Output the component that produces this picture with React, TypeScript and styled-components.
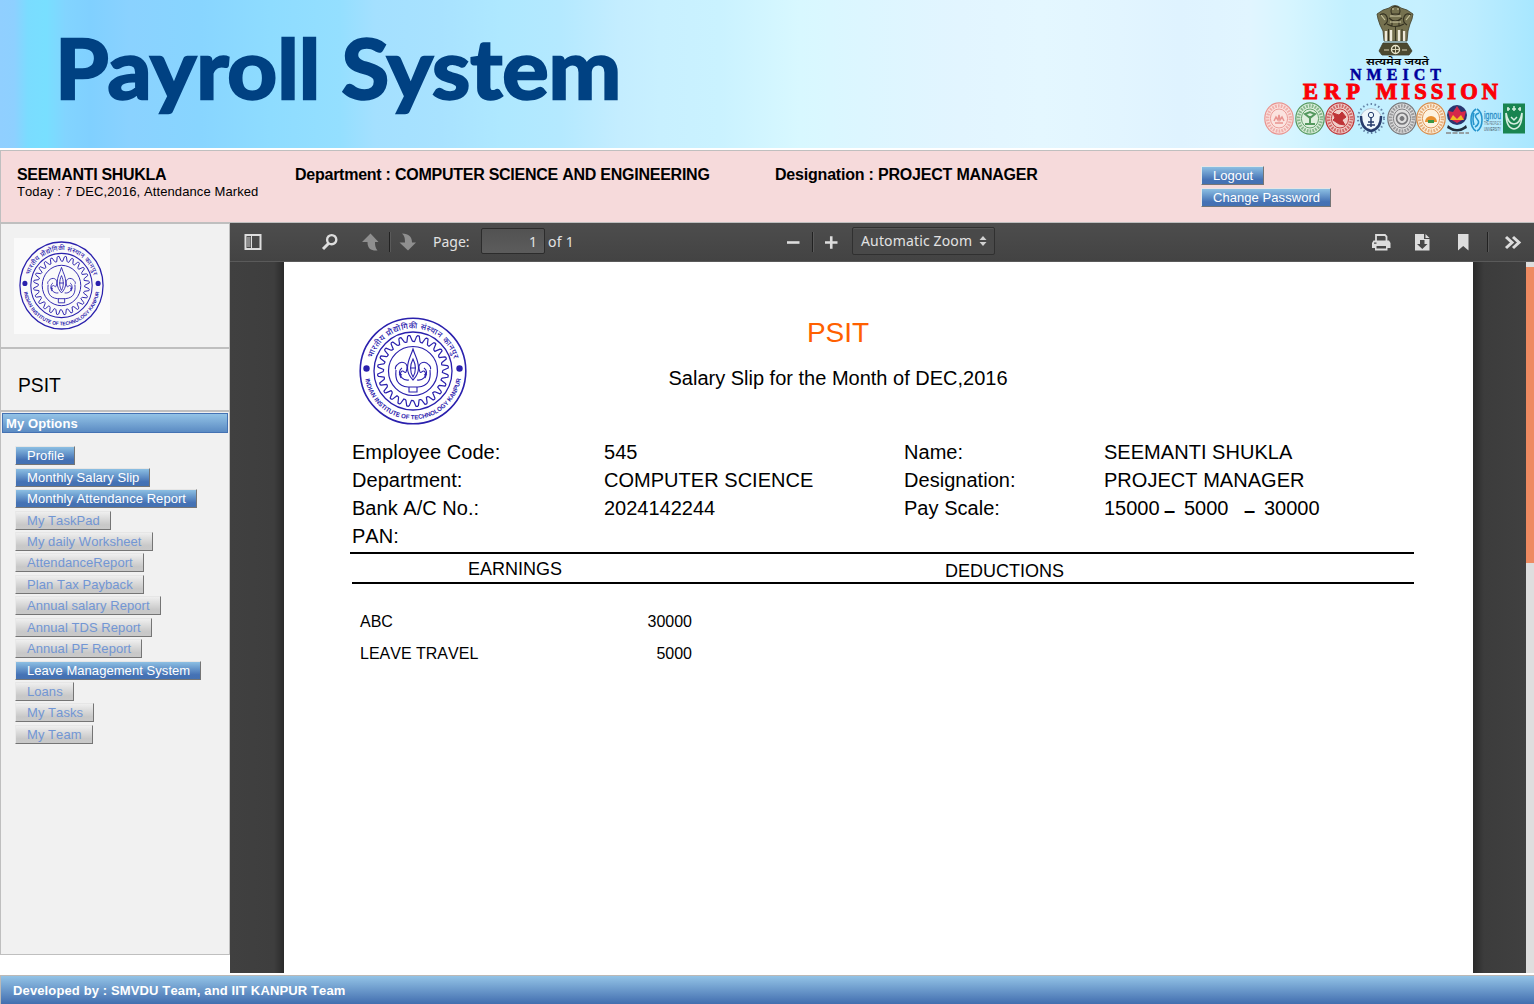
import React from "react";
import styled, { createGlobalStyle } from "styled-components";

const Global = createGlobalStyle`
  * { box-sizing: border-box; }
  html, body { margin: 0; padding: 0; background: #fff; }
  body { font-family: "Liberation Sans", Arial, sans-serif; font-kerning: none; color: #000; overflow: hidden; }
  h1, h2, p, ul { margin: 0; padding: 0; }
`;

const Screen = styled.div`
  width: 1534px;
  height: 1004px;
  display: flex;
  flex-direction: column;
  overflow: hidden;
`;

/* ---------- banner ---------- */

const Banner = styled.header`
  height: 148px;
  flex: none;
  display: flex;
  justify-content: space-between;
  background: linear-gradient(
    90deg,
    #90cfff 0, #8ed0ff 14px, #7adcff 28px, #78dfff 46px, #82d4ff 66px, #80d0ff 90px,
    #8ad2ff 130px, #88d5ff 200px, #8edcff 270px, #94dfff 340px, #a4e0ff 375px,
    #a8e2ff 440px, #aee8ff 500px, #b4e9ff 560px, #c4edff 620px, #c8f0ff 660px,
    #caf2ff 720px, #d8f8ff 800px, #dcf6ff 860px, #e2f5ff 960px, #e4f7ff 1040px,
    #e2f5ff 1120px, #dff3ff 1180px, #e1f5ff 1250px, #d6f5ff 1290px, #c2f0ff 1350px,
    #c6f0ff 1420px, #bdedff 1470px, #a8e7ff 1534px
  );
`;

const BannerTitle = styled.h1`
  margin-left: 55px;
  padding-top: 17px;
  font: 700 82px/100px Lato, sans-serif;
  font-kerning: normal;
  color: #004182;
  white-space: nowrap;
  transform: scaleX(1.06);
  transform-origin: left;
  -webkit-text-stroke: 2.4px #004182;
  paint-order: stroke fill;
`;

const BannerMark = styled.svg`
  width: 284px;
  height: 148px;
  flex: none;
`;

/* ---------- employee strip ---------- */

const EmployeeStrip = styled.section`
  height: 73px;
  margin-top: 2px;
  flex: none;
  display: grid;
  grid-template-columns: 278px 480px 426px 1fr;
  padding: 14px 0 0 16px;
  background: #f6dadb;
  border: 1px solid #bfbfbf;
  border-right: 0;
`;

const Fact = styled.div`
  padding-top: 1px;
`;

const Strong = styled.div<{ $ls?: number }>`
  font-size: 16px;
  line-height: 18px;
  font-weight: 700;
  letter-spacing: ${(p) => p.$ls ?? 0}px;
  white-space: nowrap;
`;

const Small = styled.div`
  font-size: 13px;
  line-height: 16px;
  letter-spacing: 0.1px;
`;

const Actions = styled.div`
  display: flex;
  flex-direction: column;
  align-items: flex-start;
  gap: 3px;
  padding-top: 1px;
`;

const Button = styled.button<{ $off?: boolean }>`
  height: 19px;
  padding: 0 10px 0 11px;
  font: 13px/17px "Liberation Sans", Arial, sans-serif;
  font-kerning: none;
  letter-spacing: 0.06px;
  white-space: nowrap;
  color: ${(p) => (p.$off ? "#7296d4" : "#fff")};
  background: ${(p) =>
    p.$off
      ? "linear-gradient(#efefef, #c8c8c8 75%, #c9c9c9)"
      : "linear-gradient(#8cbfe3, #4572b5 75%, #4471b2)"};
  border: 1px solid;
  border-color: #e6e6e6 #757575 #757575 #e9e9e9;
`;

/* ---------- body ---------- */

const Body = styled.div`
  height: 750px;
  flex: none;
  display: flex;
`;

const Sidebar = styled.aside`
  width: 230px;
  flex: none;
`;

const Panel = styled.section<{ $h: number }>`
  height: ${(p) => p.$h}px;
  background: #f1f1f1;
  border: 1px solid #bfbfbf;
`;

const LogoBox = styled.div`
  width: 96px;
  height: 96px;
  margin: 14px 0 0 13px;
  padding: 3px 6px 4px 5px;
  background: #fafafa;
`;

const Institute = styled.p`
  padding: 25px 0 0 17px;
  font-size: 19.3px;
  line-height: 24px;
`;

const MenuTitle = styled.h2`
  height: 20px;
  margin: 1px;
  padding-left: 3px;
  font-size: 13px;
  line-height: 19px;
  letter-spacing: 0.1px;
  color: #fff;
  background: linear-gradient(#93c3e6, #5b8bc3);
  border: 1px solid #4472b3;
`;

const Menu = styled.ul`
  list-style: none;
  padding: 12.3px 0 0 14px;
`;

const MenuItem = styled.li`
  display: flex;
  height: 21.43px;
`;

/* ---------- document viewer ---------- */

const Viewer = styled.main`
  flex: 1;
  display: flex;
  flex-direction: column;
  background: #3d3d3d;
`;

const Toolbar = styled.div`
  height: 39px;
  flex: none;
  display: flex;
  align-items: center;
  color: #e2e2e2;
  background: linear-gradient(#4d4d4d, #434343);
  border-bottom: 1px solid #5a5a5a;
  font: 14px/20px "Noto Sans", "Open Sans", sans-serif;
`;

const Icon = styled.svg<{ $ml?: number }>`
  width: 20px;
  height: 20px;
  flex: none;
  display: block;
  margin-left: ${(p) => p.$ml ?? 0}px;
`;

const Split = styled.i<{ $ml: number }>`
  width: 2px;
  height: 20px;
  margin-left: ${(p) => p.$ml}px;
  background: #222;
  border-right: 1px solid #5a5a5a;
`;

const Label = styled.span<{ $ml: number; $ls?: number; $w?: number }>`
  margin-left: ${(p) => p.$ml}px;
  width: ${(p) => (p.$w ? `${p.$w}px` : "auto")};
  letter-spacing: ${(p) => p.$ls ?? 0}px;
  white-space: nowrap;
`;

const PageField = styled.span`
  width: 64px;
  height: 26px;
  margin: -3px 0 0 11px;
  padding: 3px 7px 0 0;
  text-align: right;
  background: linear-gradient(#525252, #5c5c5c);
  border: 1px solid #2c2c2c;
  border-radius: 2px;
`;

const ZoomSelect = styled.span`
  width: 143px;
  height: 28px;
  margin: -3px 0 0 11px;
  padding: 1px 5px 0 8px;
  display: flex;
  align-items: center;
  justify-content: space-between;
  letter-spacing: 0.15px;
  white-space: nowrap;
  background: #494949;
  border: 1px solid #303030;
  border-radius: 2px;
  box-shadow: inset 0 1px #565656;
`;

const Arrows = styled.svg`
  width: 12px;
  height: 12px;
`;

const Tools = styled.div`
  display: flex;
  align-items: center;
  margin-left: auto;
  padding-right: 11px;
`;

const Canvas = styled.div`
  flex: 1;
  min-height: 0;
  display: flex;
  background: linear-gradient(90deg, #404040 0, #3e3e3e 44px, #2a2a2a 54px, #2a2a2a 1243px, #3c3c3c 1254px, #404040 1296px);
`;

const Sheet = styled.article`
  width: 1189px;
  margin-left: 54px;
  padding: 55px 0 0 66px;
  background: #fff;
`;

const SheetTop = styled.div`
  display: flex;
  height: 121px;
`;

const SealWrap = styled.div`
  width: 108px;
  height: 108px;
  margin-left: 8.5px;
  flex: none;
`;

const Titles = styled.div`
  width: 743px;
  text-align: center;
`;

const SlipTitle = styled.h1`
  font-size: 28px;
  font-weight: 400;
  line-height: 32px;
  color: #ff6000;
`;

const SlipSub = styled.p`
  margin-top: 17px;
  font-size: 20px;
  line-height: 24px;
`;

const Details = styled.div`
  display: grid;
  grid-template-columns: 252px 300px 200px 1fr;
  grid-auto-rows: 28px;
  padding-left: 2px;
  font-size: 20px;
  line-height: 28px;
  white-space: nowrap;
`;

const Cell = styled.span<{ $ls?: number }>`
  letter-spacing: ${(p) => p.$ls ?? 0.03}px;
`;

const Scale = styled.span<{ $w: number; $dash?: boolean }>`
  display: inline-block;
  width: ${(p) => p.$w}px;
  padding-top: ${(p) => (p.$dash ? 2 : 0)}px;
  height: 28px;
  vertical-align: top;
  font-weight: ${(p) => (p.$dash ? 700 : 400)};
`;

const Heads = styled.div`
  width: 1064px;
  height: 32px;
  margin-top: 2px;
  display: grid;
  grid-template-columns: 477px 1fr;
  padding-left: 118px;
  font-size: 18px;
  line-height: 30px;
  border-top: 2px solid #000;
`;

const Head = styled.span<{ $drop?: number }>`
  padding-top: ${(p) => p.$drop ?? 0}px;
`;

const Rule = styled.div`
  width: 1062px;
  height: 2px;
  margin: -2px 0 22px 2px;
  background: #000;
`;

const Earning = styled.div`
  width: 332px;
  height: 32px;
  margin-left: 10px;
  display: flex;
  justify-content: space-between;
  font-size: 16px;
  line-height: 32px;
`;

const ScrollTrack = styled.div`
  width: 8px;
  margin-left: auto;
  padding-top: 5px;
  background: #dedede;
`;

const ScrollThumb = styled.div`
  height: 296px;
  background: #ee8a61;
`;

const Footer = styled.footer`
  height: 29px;
  margin-top: 2px;
  flex: none;
  padding-left: 12px;
  font-size: 13px;
  line-height: 29px;
  font-weight: 700;
  letter-spacing: 0.13px;
  color: #fff;
  background: linear-gradient(#93c3e6, #426eaf);
  border: 1px solid #bcb9b6;
  border-width: 1px 0 0 1px;
`;

/* ---------- drawings ---------- */

const polar = (r: number, a: number) =>
  `${(54 + r * Math.cos(a)).toFixed(2)} ${(54 + r * Math.sin(a)).toFixed(2)}`;

const gearPath = (() => {
  const teeth = 24;
  const step = (Math.PI * 2) / teeth;
  let d = "";
  for (let i = 0; i < teeth; i++) {
    const a = i * step;
    d += `${i ? "L" : "M"}${polar(29.6, a)}L${polar(29.4, a + step * 0.2)}L${polar(34.8, a + step * 0.4)}L${polar(35.6, a + step * 0.5)}L${polar(35.4, a + step * 0.68)}L${polar(30.2, a + step * 0.9)}`;
  }
  return d + "Z";
})();

const SealSvg = styled.svg`
  display: block;
  width: 100%;
  height: 100%;
  fill: none;
  stroke: #2a20ad;
`;

function Seal({ id }: { id: string }) {
  return (
    <SealSvg viewBox="0 0 108 108" preserveAspectRatio="none">
      <circle cx="54" cy="54" r="52.8" strokeWidth="1.6" />
      <circle cx="54" cy="54" r="39" strokeWidth="1.3" />
      <circle cx="54" cy="54" r="24.5" strokeWidth="1.2" />
      <path d={gearPath} strokeWidth="1.2" strokeLinejoin="round" />
      <circle cx="7.5" cy="51.5" r="3.2" fill="#2a20ad" stroke="none" />
      <circle cx="100.5" cy="51.5" r="3.2" fill="#2a20ad" stroke="none" />
      <g strokeWidth="1.1">
        <path d="M54 32C52 39 48.5 43 48.5 51C48.5 56 51 60 54 63C57 60 59.5 56 59.5 51C59.5 43 56 39 54 32Z" />
        <path d="M54 42C51 48 51 55 54 60C57 55 57 48 54 42ZM51 51H57" />
        <path d="M50 63C44 64 40 59 42 55C44 52 46 57 47 55C51 45 42 43 38 48C36 50 36 52 37 52M37 53C36 62 38 69 49 70H59C70 69 72 62 71 53" />
        <path d="M58 63C64 64 68 59 66 55C64 52 62 57 61 55C57 45 66 43 70 48C72 50 72 52 71 52" />
        <path d="M40 57L43 58M68 57L65 58M42 61C40 57 40 53 43 51M66 61C68 57 68 53 65 51" />
        <path d="M50 70V75H58V70" />
      </g>
      <path id={`${id}-top`} d="M11.5 54A42.5 42.5 0 0 1 96.5 54" stroke="none" />
      <path id={`${id}-low`} d="M5.6 54A48.4 48.4 0 0 0 102.4 54" stroke="none" />
      <g fill="#2a20ad" stroke="none">
        <text fontFamily="'Noto Sans Devanagari', 'Noto Sans', sans-serif" fontSize="8" fontWeight="500">
          <textPath href={`#${id}-top`} startOffset="13" textLength="108">भारतीय प्रौद्योगिकी संस्थान कानपुर</textPath>
        </text>
        <text fontFamily="'Liberation Sans', sans-serif" fontSize="6.3" fontWeight="700">
          <textPath href={`#${id}-low`} startOffset="8" textLength="136" lengthAdjust="spacingAndGlyphs">INDIAN INSTITUTE OF TECHNOLOGY KANPUR</textPath>
        </text>
      </g>
    </SealSvg>
  );
}

function Roundel({ cx, color, fill, kind }: { cx: number; color: string; fill: string; kind: number }) {
  return (
    <g stroke={color} fill="none">
      <ellipse cx={cx} cy="118.5" rx="14.2" ry="15.6" fill={fill} strokeWidth="1.2" />
      <ellipse cx={cx} cy="118.5" rx="11.4" ry="12.6" strokeWidth="3.4" strokeDasharray="1.8 1.1" opacity=".65" />
      <ellipse cx={cx} cy="118.5" rx="8.6" ry="9.5" strokeWidth=".9" />
      {kind === 0 && <path d={`M${cx - 5} 121l2-4 2 3 1-5 1 5 2-3 2 4M${cx - 4} 123h8`} strokeWidth="1.5" />}
      {kind === 1 && <path d={`M${cx} 124v-8m-5-2l5 4 5-4-5-2zM${cx - 5} 124h10`} strokeWidth="2" />}
      {kind === 2 && <path d={`M${cx - 7} 113l6 2 3-3 4 5-4 3 3 5-6-1-6-4 2-2z`} fill={color} />}
      {kind === 3 && (
        <g>
          <circle cx={cx} cy="118.5" r="5.5" strokeWidth="1.6" />
          <circle cx={cx} cy="118.5" r="2" fill={color} />
        </g>
      )}
      {kind === 4 && (
        <g>
          <path d={`M${cx - 6} 122a6 6 0 0 1 12 0z`} fill="#e8902f" stroke="none" />
          <path d={`M${cx - 3} 120h6v3h-6z`} fill="#3a9545" stroke="none" />
        </g>
      )}
    </g>
  );
}

function Mark() {
  return (
    <BannerMark viewBox="0 0 284 148">
      <g fill="#75714f" stroke="#3f3c28" strokeWidth=".8">
        <path d="M139 8Q145 3 151 8L157 10 163 14 162 19 160 24 158 31 157 41H134L133 31 130 25 128 19 127 14 133 10Z" />
        <path d="M133 43L157 43 162 51 159 55H132L129 51Z" fill="#4c492f" />
      </g>
      <path d="M136 31v10M141 30v11M149 30v11M154 31v10" stroke="#eeeada" strokeWidth="2.4" />
      <path d="M138.500 29v12M145.500 26v15M152 29v12" stroke="#35321f" strokeWidth="1" />
      <g fill="none" stroke="#343120" strokeWidth="1.1">
        <circle cx="145.500" cy="11" r="4.500" />
        <path d="M130 15q5-3 7 2t-3 8M161 15q-5-3-7 2t3 8M139 18q6 6 13 0M137 24q8 5 17 0M141 14h9M142 20v6M149 20v6" />
        <path d="M131 15l4 5M160 15l-4 5" stroke="#cdc8a0" />
        <path d="M142 9h2m3 0h2M140 16h11M140 22h11" stroke="#d5d0a9" />
      </g>
      <circle cx="145.500" cy="49.500" r="4" fill="#4c492f" stroke="#eeead0" strokeWidth="1.4" />
      <path d="M134 50h5M152 50h5M141.500 49.500h8M145.500 45.500v8" stroke="#dbd6b8" strokeWidth="1" />
      <text x="116" y="65" textLength="63" lengthAdjust="spacingAndGlyphs" fontSize="10" fontWeight="600" fontFamily="'Noto Sans Devanagari', 'Noto Sans', sans-serif">सत्यमेव जयते</text>
      <g fontFamily="'Liberation Serif', serif" fontWeight="700">
        <text x="100" y="79.500" textLength="91" fontSize="16" fill="#00009c" stroke="#00009c" strokeWidth=".5">NMEICT</text>
        <text fontSize="22.500" fill="#fb0007" stroke="#fb0007" strokeWidth="1">
          <tspan x="53" y="99" textLength="57">ERP</tspan>
          <tspan x="126" y="99" textLength="122">MISSION</tspan>
        </text>
      </g>
      <Roundel cx={29} color="#e99490" fill="#fbe3df" kind={0} />
      <Roundel cx={60} color="#56995f" fill="#e0f0df" kind={1} />
      <Roundel cx={90} color="#bf3437" fill="#f0cfc9" kind={2} />
      <g fill="none" stroke="#263c6c">
        <ellipse cx="121" cy="118.500" rx="13" ry="14.500" strokeWidth="2" strokeDasharray="1.500 2.500" opacity=".6" />
        <circle cx="121" cy="119" r="10.500" fill="#eef7fb" stroke="#b9c8d6" strokeWidth="1" />
        <path d="M111 116q0 13 10 15 10-2 10-15" strokeWidth="2.400" />
        <circle cx="121" cy="115" r="2.700" />
        <path d="M121 118v9m-3-5h6m-7 3h8" strokeWidth="1.500" />
      </g>
      <Roundel cx={152} color="#77777a" fill="#dedede" kind={3} />
      <Roundel cx={181} color="#d98b48" fill="#fdf2df" kind={4} />
      <g>
        <circle cx="207" cy="115" r="10" fill="#29356f" />
        <path d="M207 106l4 6 5-1-2 8-7 4-7-4-2-8 5 1z" fill="#d5274a" />
        <path d="M203 115l4 4 4-4 3 5h-14z" fill="#f0bb24" />
        <path d="M198 125q9 8 18 0l1 3q-10 7-20 0z" fill="#222f3e" />
        <path d="M196 133h23" stroke="#888" strokeWidth="1.500" strokeDasharray="5 1.500" />
      </g>
      <g fill="none" stroke="#2594cc" strokeWidth="1.600">
        <path d="M226 109q-5 3-5 11t5 11M227 109q5 3 5 11t-5 11M229 113q-6 2-2 6t-2 8M224 113q-2 6 0 12" />
      </g>
      <text x="234" y="119" fontSize="11" textLength="17" lengthAdjust="spacingAndGlyphs" fill="#268cc6" stroke="#268cc6" strokeWidth=".3" fontFamily="'Liberation Sans', sans-serif">ignou</text>
      <text x="234" y="125" fontSize="4.500" textLength="17" lengthAdjust="spacingAndGlyphs" fill="#60717b" fontFamily="'Liberation Sans', sans-serif">THE PEOPLE'S</text>
      <text x="234" y="131" fontSize="5" textLength="17" lengthAdjust="spacingAndGlyphs" fill="#42525b" fontFamily="'Liberation Sans', sans-serif">UNIVERSITY</text>
      <rect x="253" y="103.500" width="22" height="30" fill="#198450" />
      <path d="M256 113q0 15 8 16 8-1 8-16-2 11-8 11t-8-11" fill="none" stroke="#d6eee0" strokeWidth="1.600" />
      <path d="M257 109h3m2 0h4m2 0h3M258 107v4m6-5v5m6-4v4M261 117l3 3 3-3" stroke="#d6eee0" strokeWidth="1.500" fill="none" />
    </BannerMark>
  );
}

const light = "#dddddd";
const dim = "#8f8f8f";

const menu: [string, boolean][] = [
  ["Profile", true],
  ["Monthly Salary Slip", true],
  ["Monthly Attendance Report", true],
  ["My TaskPad", false],
  ["My daily Worksheet", false],
  ["AttendanceReport", false],
  ["Plan Tax Payback", false],
  ["Annual salary Report", false],
  ["Annual TDS Report", false],
  ["Annual PF Report", false],
  ["Leave Management System", true],
  ["Loans", false],
  ["My Tasks", false],
  ["My Team", false],
];

export default function App() {
  return (
    <Screen>
      <Global />
      <Banner>
        <BannerTitle>Payroll System</BannerTitle>
        <Mark />
      </Banner>

      <EmployeeStrip>
        <Fact>
          <Strong $ls={-0.3}>SEEMANTI SHUKLA</Strong>
          <Small>Today : 7 DEC,2016, Attendance Marked</Small>
        </Fact>
        <Fact><Strong $ls={-0.25}>Department : COMPUTER SCIENCE AND ENGINEERING</Strong></Fact>
        <Fact><Strong $ls={-0.2}>Designation : PROJECT MANAGER</Strong></Fact>
        <Actions>
          <Button>Logout</Button>
          <Button>Change Password</Button>
        </Actions>
      </EmployeeStrip>

      <Body>
        <Sidebar>
          <Panel $h={125}>
            <LogoBox><Seal id="side" /></LogoBox>
          </Panel>
          <Panel $h={63}>
            <Institute>PSIT</Institute>
          </Panel>
          <Panel $h={544}>
            <MenuTitle>My Options</MenuTitle>
            <Menu>
              {menu.map(([label, on]) => (
                <MenuItem key={label}><Button $off={!on}>{label}</Button></MenuItem>
              ))}
            </Menu>
          </Panel>
        </Sidebar>

        <Viewer>
          <Toolbar>
            <Icon $ml={13} viewBox="0 0 20 20">
              <path d="M2.500 3h15v14h-15z" fill="none" stroke={light} strokeWidth="2" />
              <path d="M4 5h3.500v10H4z" fill="#8b8b8b" />
              <path d="M8.500 4v12" stroke={light} />
            </Icon>
            <Icon $ml={57} viewBox="0 0 20 20" fill="none" stroke={light}>
              <circle cx="11.700" cy="7.700" r="4.600" strokeWidth="2.400" />
              <path d="M8.500 11.500L3 17" strokeWidth="3" />
            </Icon>
            <Icon $ml={20} viewBox="0 0 20 20">
              <path d="M10.500 1.500L18.500 10h-3.500c0 4 .5 6 2.500 8.500-6 .5-10-1.500-10-8.500H2z" fill={dim} />
            </Icon>
            <Split $ml={9} />
            <Icon $ml={6} viewBox="0 0 20 20">
              <path d="M11 18.500L19 10.500h-4c0-6-3-8.500-10-9C7.500 4 8 6 8 10.500H2.500z" fill={dim} />
            </Icon>
            <Label $ml={16} $w={37}>Page:</Label>
            <PageField>1</PageField>
            <Label $ml={3} $ls={0.3} $w={26}>of 1</Label>
            <Icon $ml={209} viewBox="0 0 20 20"><path d="M4 10.500h12.500" stroke={light} strokeWidth="2.600" /></Icon>
            <Split $ml={9} />
            <Icon $ml={7} viewBox="0 0 20 20"><path d="M4 10.500h12.500M10.250 4.250v12.500" stroke={light} strokeWidth="2.600" /></Icon>
            <ZoomSelect>
              Automatic Zoom
              <Arrows viewBox="0 0 12 12"><path d="M2.500 5L6 1l3.500 4zM2.500 7L6 11l3.500-4z" fill="#d2d2d2" /></Arrows>
            </ZoomSelect>
            <Tools>
              <Icon viewBox="0 0 20 20">
                <path d="M5 9V3h9l1.500 1.500V9" fill="none" stroke={light} strokeWidth="1.800" />
                <path fillRule="evenodd" d="M2.500 8.500h15.500l1.500 2.500V16H16.500v2.500H4V16H1V11zM5.500 14v2.500h9.500V14zM3 10.500v1.300h2.500v-1.300z" fill={light} />
              </Icon>
              <Icon $ml={21} viewBox="0 0 20 20">
                <path fillRule="evenodd" d="M3 2h9v5h5.500v11.500H3zM8 8v4H5l5.300 5 5.200-5h-3V8z" fill={light} />
                <path d="M13.500 2l4 4h-4z" fill={light} />
              </Icon>
              <Icon $ml={21} viewBox="0 0 20 20"><path d="M5 2h10.500v16.500l-5.300-4.500L5 18.500z" fill={light} /></Icon>
              <Split $ml={14} />
              <Icon $ml={14} viewBox="0 0 20 20" fill="none" stroke={light} strokeWidth="3">
                <path d="M3 5l6 5.500L3 16M10 5l6 5.500-6 5.500" />
              </Icon>
            </Tools>
          </Toolbar>

          <Canvas>
            <Sheet>
              <SheetTop>
                <SealWrap><Seal id="slip" /></SealWrap>
                <Titles>
                  <SlipTitle>PSIT</SlipTitle>
                  <SlipSub>Salary Slip for the Month of DEC,2016</SlipSub>
                </Titles>
              </SheetTop>
              <Details>
                <Cell>Employee Code:</Cell><Cell>545</Cell>
                <Cell>Name:</Cell><Cell>SEEMANTI SHUKLA</Cell>
                <Cell>Department:</Cell><Cell>COMPUTER SCIENCE</Cell>
                <Cell>Designation:</Cell><Cell>PROJECT MANAGER</Cell>
                <Cell>Bank A/C No.:</Cell><Cell $ls={0}>2024142244</Cell>
                <Cell>Pay Scale:</Cell>
                <Cell $ls={0}>
                  <Scale $w={60}>15000</Scale><Scale $w={20} $dash>–</Scale>
                  <Scale $w={60}>5000</Scale><Scale $w={20} $dash>–</Scale>
                  <Scale $w={60}>30000</Scale>
                </Cell>
                <Cell>PAN:</Cell>
              </Details>
              <Heads>
                <Head>EARNINGS</Head>
                <Head $drop={2}>DEDUCTIONS</Head>
              </Heads>
              <Rule />
              <Earning><span>ABC</span><span>30000</span></Earning>
              <Earning><span>LEAVE TRAVEL</span><span>5000</span></Earning>
            </Sheet>
            <ScrollTrack><ScrollThumb /></ScrollTrack>
          </Canvas>
        </Viewer>
      </Body>

      <Footer>Developed by : SMVDU Team, and IIT KANPUR Team</Footer>
    </Screen>
  );
}
